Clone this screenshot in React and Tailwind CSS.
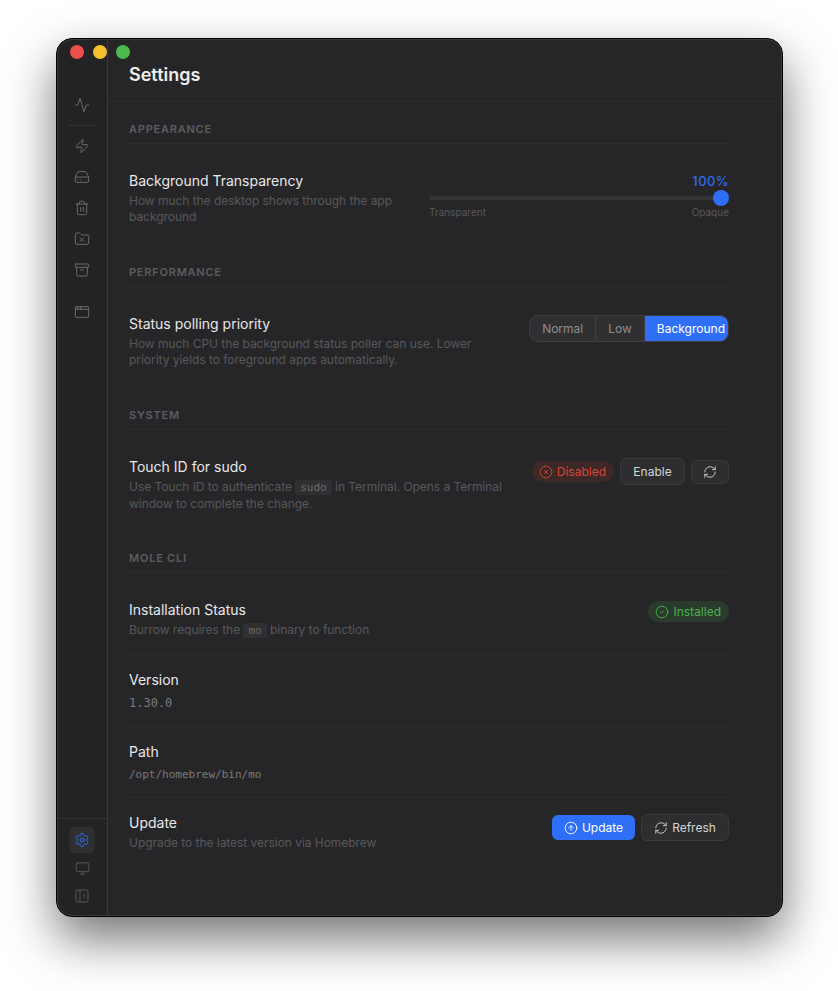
import {
  Activity,
  AppWindow,
  Archive,
  CircleArrowUp,
  CircleCheck,
  CircleX,
  FolderX,
  HardDrive,
  Monitor,
  PanelLeftOpen,
  RefreshCw,
  Settings,
  Trash2,
  Zap,
} from 'lucide-react'

function NavIcon({ icon: Icon, className = '', size = 16 }) {
  return (
    <div className={`w-[26px] h-[26px] flex items-center justify-center text-[#6b6b6e] ${className}`}>
      <Icon size={size} strokeWidth={1.5} />
    </div>
  )
}

function SectionTitle({ children }) {
  return (
    <div className="h-[25px] border-b border-[#2e2e30] text-[11px] leading-[16px] font-semibold tracking-[0.07em] text-[#5c5c5f] pt-[2px]">
      {children}
    </div>
  )
}

function Title({ children }) {
  return <div className="text-[14px] leading-[20px] font-normal text-[#e8e8e8]">{children}</div>
}

function Desc({ children }) {
  return <div className="text-[12px] leading-[16px] tracking-[-0.04px] text-[#58585b] mt-[2px]">{children}</div>
}

function Code({ children }) {
  return (
    <code className="font-['DejaVu_Sans_Mono',monospace] text-[11px] tracking-normal px-[5px] py-[1px] rounded-[3px] bg-[#303032] text-[#6b6b6e]">
      {children}
    </code>
  )
}

function Btn({ children, className = '' }) {
  return (
    <button className={`flex items-center justify-center gap-[4px] rounded-[6px] border border-[#3a3a3c] bg-[#2e2e30] text-[12px] font-normal text-[#d4d4d6] ${className}`}>
      {children}
    </button>
  )
}

export default function App() {
  return (
    <div className="w-[838px] h-[991px] bg-white pt-[38px] pl-[56px] font-['Inter',sans-serif] antialiased overflow-hidden">
      <div className="relative w-[727px] h-[879px] flex rounded-[16px] bg-[#262628] border border-black shadow-[0_22px_50px_rgba(0,0,0,0.55)] overflow-hidden">
        <div className="absolute inset-0 rounded-[15px] border border-[#3c3c3e] pointer-events-none" />
        <div className="absolute left-[13px] top-[6px] flex gap-[9px]">
          <div className="w-[14px] h-[14px] rounded-full bg-[#ed4f4a]" />
          <div className="w-[14px] h-[14px] rounded-full bg-[#f5bf2e]" />
          <div className="w-[14px] h-[14px] rounded-full bg-[#4cb94a]" />
        </div>

        <aside className="w-[51px] shrink-0 border-r border-[#38383a] bg-[#232325] flex flex-col items-center pt-[52px]">
          <NavIcon icon={Activity} className="translate-y-[1px]" />
          <div className="w-[28px] h-px bg-[#333335] mt-[8px] mb-[7px]" />
          <div className="flex flex-col gap-[5px]">
            <NavIcon icon={Zap} />
            <NavIcon icon={HardDrive} />
            <NavIcon icon={Trash2} />
            <NavIcon icon={FolderX} />
            <NavIcon icon={Archive} />
            <NavIcon icon={AppWindow} className="mt-[11px]" />
          </div>
          <div className="mt-auto w-full border-t border-[#333335] pt-[8px] pb-[7px] flex flex-col items-center gap-[2px]">
            <NavIcon icon={Settings} className="rounded-[6px] bg-[#2f2f32] !text-[#2f6bea]" />
            <NavIcon icon={Monitor} size={15} className="!text-[#58585b]" />
            <NavIcon icon={PanelLeftOpen} className="!text-[#58585b]" />
          </div>
        </aside>

        <main className="flex-1 min-w-0">
          <header className="h-[63px] border-b border-[#2e2e30] pl-[21px] pt-[22px]">
            <h1 className="text-[18px] leading-[28px] font-semibold text-[#ededed]">Settings</h1>
          </header>

          <div className="w-[600px] ml-[21px] pt-[17px]">
            <SectionTitle>APPEARANCE</SectionTitle>
            <div className="flex justify-between pt-[27px] h-[118px]">
              <div className="w-[280px]">
                <Title>Background Transparency</Title>
                <Desc>How much the desktop shows through the app background</Desc>
              </div>
              <div className="w-[300px]">
                <div className="text-right text-[13px] leading-[16px] font-medium tracking-[0.03em] text-[#2f6bf0] mt-[2px]">100%</div>
                <div className="relative h-[4px] mt-[7px] rounded-full bg-[#333335]">
                  <div className="absolute right-0 top-[-6px] w-[16px] h-[16px] rounded-full bg-[#2f6ff5]" />
                </div>
                <div className="flex justify-between text-[10px] leading-[14px] text-[#58585b] mt-[5px]">
                  <span>Transparent</span>
                  <span>Opaque</span>
                </div>
              </div>
            </div>

            <SectionTitle>PERFORMANCE</SectionTitle>
            <div className="flex justify-between pt-[27px] h-[118px]">
              <div className="w-[350px]">
                <Title>Status polling priority</Title>
                <Desc>How much CPU the background status poller can use. Lower priority yields to foreground apps automatically.</Desc>
              </div>
              <div className="flex h-[27px] mt-[1px] rounded-[9px] border border-[#3e3e40] bg-[#303032] overflow-hidden text-[12px] font-normal">
                <div className="px-[12px] flex items-center border-r border-[#3e3e40] text-[#8e8e90]">Normal</div>
                <div className="px-[12px] flex items-center border-r border-[#3e3e40] text-[#8e8e90]">Low</div>
                <div className="pl-[12px] pr-[3px] flex items-center bg-[#2f6ff5] text-white">Background</div>
              </div>
            </div>

            <SectionTitle>SYSTEM</SectionTitle>
            <div className="flex justify-between pt-[27px] h-[118px]">
              <div className="w-[380px]">
                <Title>Touch ID for sudo</Title>
                <Desc>
                  Use Touch ID to authenticate <Code>sudo</Code> in Terminal. Opens a Terminal
                  <br />
                  window to complete the change.
                </Desc>
              </div>
              <div className="flex items-start gap-[6px]">
                <div className="flex items-center gap-[4px] h-[21px] mt-[4px] pl-[7px] pr-[8px] rounded-full bg-[#3c2826] text-[12px] font-normal text-[#d8463a]">
                  <CircleX size={14} strokeWidth={1.5} />
                  Disabled
                </div>
                <Btn className="w-[65px] h-[27px] mt-[1px]">Enable</Btn>
                <Btn className="w-[38px] h-[24px] mt-[3px]"><RefreshCw size={14} strokeWidth={1.5} /></Btn>
              </div>
            </div>

            <SectionTitle>MOLE CLI</SectionTitle>
            <div className="flex justify-between pt-[27px] h-[82px] border-b border-[#2e2e30]">
              <div>
                <Title>Installation Status</Title>
                <Desc>Burrow requires the <Code>mo</Code> binary to function</Desc>
              </div>
              <div className="flex items-center gap-[4px] h-[21px] mt-[1px] pl-[7px] pr-[8px] rounded-full bg-[#2a3a2c] text-[12px] font-normal text-[#4ab34e]">
                <CircleCheck size={14} strokeWidth={1.5} />
                Installed
              </div>
            </div>
            <div className="h-[72px] pt-[15px] border-b border-[#2e2e30]">
              <Title>Version</Title>
              <div className="font-['DejaVu_Sans_Mono',monospace] text-[12px] leading-[16px] text-[#7a7a7d] mt-[5px]">1.30.0</div>
            </div>
            <div className="h-[71px] pt-[15px] border-b border-[#2e2e30]">
              <Title>Path</Title>
              <div className="font-['DejaVu_Sans_Mono',monospace] text-[11px] leading-[16px] text-[#7a7a7d] mt-[5px]">/opt/homebrew/bin/mo</div>
            </div>
            <div className="flex justify-between pt-[15px]">
              <div>
                <Title>Update</Title>
                <Desc>Upgrade to the latest version via Homebrew</Desc>
              </div>
              <div className="flex items-start gap-[6px]">
                <button className="flex items-center justify-center gap-[4px] w-[83px] h-[25px] mt-[2px] rounded-[6px] bg-[#2f6ff5] text-[12px] font-normal text-white">
                  <CircleArrowUp size={14} strokeWidth={1.5} />
                  Update
                </button>
                <Btn className="w-[88px] h-[27px] mt-[1px]"><RefreshCw size={14} strokeWidth={1.5} />Refresh</Btn>
              </div>
            </div>
          </div>
        </main>
      </div>
    </div>
  )
}
